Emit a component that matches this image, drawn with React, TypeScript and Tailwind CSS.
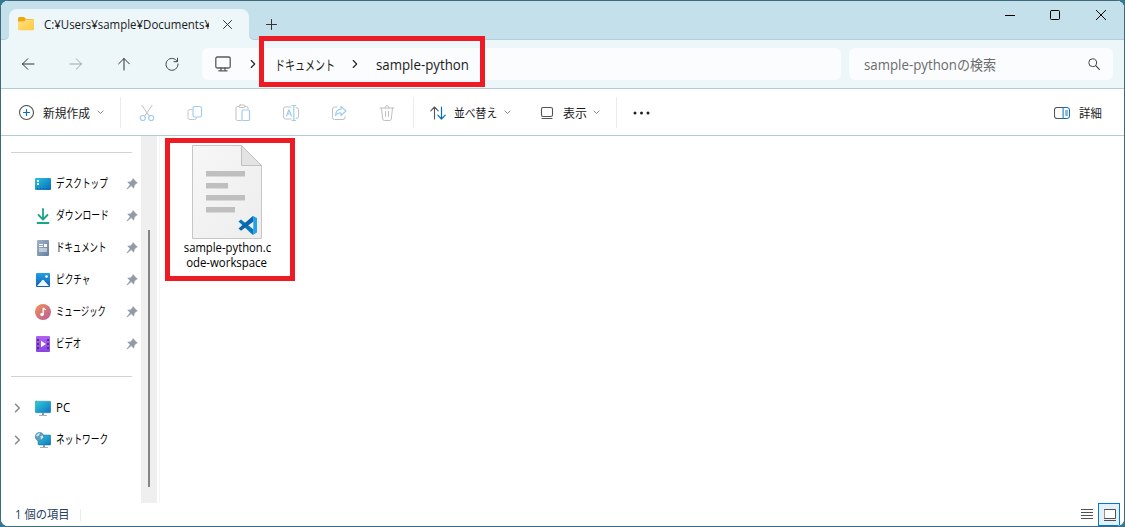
import React from "react";

type SvgProps = { w: number; h: number; className?: string; children: React.ReactNode };

function Svg({ w, h, className = "", children }: SvgProps) {
  return (
    <svg
      width={w}
      height={h}
      viewBox={`0 0 ${w} ${h}`}
      fill="none"
      stroke="currentColor"
      strokeWidth="1"
      strokeLinecap="round"
      strokeLinejoin="round"
      className={`block shrink-0 ${className}`}
    >
      {children}
    </svg>
  );
}

function Label({ box, text, children }: { box: string; text: string; children: React.ReactNode }) {
  return (
    <span className={`block shrink-0 whitespace-nowrap ${box}`}>
      <span className={`inline-block origin-left ${text}`}>{children}</span>
    </span>
  );
}

function FolderIcon() {
  return (
    <Svg w={16} h={14}>
      <path d="M0 2Q0 0 1.500 0H6L8 2H14.500Q16 2 16 3.500V8H0Z" fill="#eda80b" stroke="none" />
      <path d="M0 4.500H6L8 2.600H14.500Q16 2.600 16 4V12Q16 13.300 14.700 13.300H1.300Q0 13.300 0 12Z" fill="url(#folder)" stroke="none" />
      <defs>
        <linearGradient id="folder" x1="0" y1="0" x2="1" y2="1">
          <stop stopColor="#ffe08a" />
          <stop offset="1" stopColor="#ffc93a" />
        </linearGradient>
      </defs>
    </Svg>
  );
}

function TitleBar() {
  return (
    <div className="flex h-[39px] shrink-0 bg-[#c4e1eb]">
      <div className="flex h-full w-2 items-end bg-[#edf6f9]">
        <div className="h-full w-full rounded-br-[5px] border-b border-[#b2ced8] bg-[#c4e1eb]" />
      </div>
      <div className="h-full w-60 bg-[#c4e1eb] pt-2">
        <div className="flex h-[31px] items-center rounded-t-lg bg-[#edf6f9] pb-px pl-[9px]">
          <FolderIcon />
          <Label box="ml-[10px] w-[165px] overflow-hidden pt-px text-[12px] font-medium text-[#1b1b1b]" text="scale-x-[0.955]">
            C:¥Users¥sample¥Documents¥
          </Label>
          <Svg w={9} h={9} className="ml-[14px] text-[#333]">
            <path d="M.5.5l8 8M8.500.5l-8 8" />
          </Svg>
        </div>
      </div>
      <div className="h-full grow bg-[#edf6f9]">
        <div className="flex h-full rounded-bl-[5px] border-b border-[#b2ced8] bg-[#c4e1eb] pl-[17px]">
          <Svg w={11} h={11} className="mt-[18px] text-[#333]">
            <path d="M5.500.5v10M.5 5.500h10" />
          </Svg>
          <div className="grow" />
          <Svg w={10} h={10} className="mt-[9px] mr-[35px] text-black">
            <path d="M0 5.500h10" strokeLinecap="butt" />
          </Svg>
          <Svg w={10} h={10} className="mt-[9px] mr-[36px] text-black">
            <rect x=".5" y=".5" width="9" height="9" rx="1" />
          </Svg>
          <Svg w={10} h={10} className="mt-[9px] mr-[18px] text-black">
            <path d="M.2.2l9.600 9.600M9.800.2L.2 9.800" />
          </Svg>
        </div>
      </div>
    </div>
  );
}

function Arrow({ className }: { className: string }) {
  return (
    <Svg w={14} h={14} className={className}>
      <path d="M13 7H1.500M6.800 1.700L1.500 7l5.300 5.300" />
    </Svg>
  );
}

function Crumb() {
  return (
    <Svg w={6} h={10} className="text-[#222]">
      <path d="M1.200 1.500L4.700 5 1.200 8.500" strokeWidth="1.100" />
    </Svg>
  );
}

function NavBar() {
  return (
    <div className="flex h-[49px] shrink-0 items-center border-b border-[#afcdd6] bg-[#edf6f9]">
      <Arrow className="ml-5 text-[#333]" />
      <Arrow className="ml-[34px] rotate-180 text-[#a0a8ac]" />
      <Arrow className="ml-[34px] rotate-90 text-[#333]" />
      <Svg w={14} h={14} className="ml-[34px] text-[#444]">
        <path d="M12.300 4.500A6 6 0 1 0 13 7M12.500 1.200v3.500H9" />
      </Svg>
      <div className="ml-[23px] flex h-8 w-[639px] items-center rounded-md bg-[#fafcfe] pl-[13px] text-[14px] text-[#1b1b1b]">
        <Svg w={16} h={16} className="text-[#5a5a5a]">
          <rect x=".8" y="1" width="14.400" height="11" rx="1.500" strokeWidth="1.300" />
          <path d="M6 12v2.500M10 12v2.500M3.800 14.800h8.400" strokeWidth="1.300" />
        </Svg>
        <div className="w-[19px]" />
        <Crumb />
        <Label box="ml-[19px] w-[60px]" text="scale-x-[0.715]">ドキュメント</Label>
        <div className="w-[17px]" />
        <Crumb />
        <Label box="ml-[18px] w-[94px]" text="scale-x-[0.948]">sample-python</Label>
      </div>
      <div className="ml-2 flex h-8 w-[264px] items-center rounded-md bg-[#fafcfe] pl-[15px] text-[14px] text-[#6b6b6b]">
        <Label box="w-[93px]" text="scale-x-[0.948]">sample-python</Label>
        <Label box="w-[131px]" text="scale-x-[0.93]">の検索</Label>
        <Svg w={12} h={12} className="text-[#444]">
          <circle cx="4.700" cy="4.700" r="3.900" />
          <path d="M7.700 7.700l3.600 3.600" strokeWidth="1.200" />
        </Svg>
      </div>
    </div>
  );
}

function Chevron({ className }: { className: string }) {
  return (
    <Svg w={7} h={5} className={`text-[#888] ${className}`}>
      <path d="M1 1l2.500 2.500L6 1" />
    </Svg>
  );
}

function Divider({ className }: { className: string }) {
  return <div className={`h-[31px] w-px shrink-0 bg-[#ececec] ${className}`} />;
}

const BLUE = "#9fcdee";

function ToolBar() {
  return (
    <div className="flex h-[47px] shrink-0 items-center border-b border-[#afcdd6] bg-white pt-px text-[12px] text-[#1b1b1b]">
      <Svg w={16} h={16} className="ml-[17px] text-[#555]">
        <circle cx="8.500" cy="7.500" r="7" strokeWidth="1.100" />
        <path d="M8.500 4.500v6M5.500 7.500h6" stroke="#0a6fc2" strokeWidth="1.200" />
      </Svg>
      <Label box="ml-[9px] w-[53px] pt-[2px]" text="scale-x-[0.98]">新規作成</Label>
      <Chevron className="ml-[1px]" />
      <Divider className="ml-[16px]" />

      <Svg w={16} h={18} className="ml-[18px] text-[#bdbdbd]">
        <path d="M3 1.500l7.500 10.800M13 1.500L5.500 12.300" />
        <circle cx="3.800" cy="14" r="2.500" stroke={BLUE} strokeWidth="1.200" />
        <circle cx="12.200" cy="14" r="2.500" stroke={BLUE} strokeWidth="1.200" />
      </Svg>
      <Svg w={16} h={16} className="ml-[32px] text-[#c6c6c6]">
        <path d="M4.500 4.500H3Q1 4.500 1 6.500V12.500Q1 14.500 3 14.500H7.500Q9.500 14.500 9.500 12.500" />
        <rect x="6" y="1.500" width="8.500" height="10.500" rx="1.800" stroke={BLUE} strokeWidth="1.200" />
      </Svg>
      <Svg w={16} h={18} className="ml-[32px] text-[#c0c0c0]">
        <path d="M6 16.500H2.500Q1 16.500 1 15V4Q1 2.500 2.500 2.500H4M10 2.500h1.500Q13 2.500 13 4v1" />
        <rect x="4" y="1" width="6" height="2.500" rx="1.200" />
        <rect x="7" y="6" width="7.500" height="10.500" rx="1" stroke={BLUE} strokeWidth="1.200" />
      </Svg>
      <Svg w={18} h={18} className="ml-[31px] text-[#c0c0c0]">
        <path d="M9 3H3.500Q1.500 3 1.500 5V13Q1.500 15 3.500 15H9M14 3.500Q16.500 3.500 16.500 5.500V12.500Q16.500 14.500 14 14.500" />
        <path d="M4.500 12L7 5.700 9.500 12M5.300 10h3.400M11.800 1.500v15M10 1.500h3.600M10 16.500h3.600" stroke={BLUE} strokeWidth="1.200" />
      </Svg>
      <Svg w={16} h={16} className="ml-[31px] text-[#c0c0c0]">
        <path d="M6 2H3.500Q1.500 2 1.500 4v8.500Q1.500 14.500 3.500 14.500h8.500Q14 14.500 14 12.500V11.500" />
        <path d="M10 1.500L15 6l-5 4.500V8Q6.500 7.500 4.500 10.500 4.800 4.500 10 4.200Z" stroke={BLUE} strokeWidth="1.200" />
      </Svg>
      <Svg w={16} h={18} className="ml-[32px] text-[#c0c0c0]">
        <path d="M1 4h14M2.500 4l1.200 11Q3.900 16.500 5.300 16.500h5.400Q12.100 16.500 12.300 15L13.500 4M6 4Q6 1.500 8 1.500T10 4M6.500 7.500v5M9.500 7.500v5" />
      </Svg>
      <Divider className="ml-[18px]" />

      <Svg w={16} h={14} className="ml-[16px] text-[#555]">
        <path d="M4.500 13V1M.8 4.800L4.500 1l3.700 3.800" strokeWidth="1.100" />
        <path d="M11.500 1v12M7.800 9.200l3.700 3.800 3.700-3.800" stroke="#0a6fc2" strokeWidth="1.200" />
      </Svg>
      <Label box="ml-[8px] w-[49px] pt-[2px]" text="scale-x-[0.9]">並べ替え</Label>
      <Chevron className="ml-[1px]" />
      <Svg w={14} h={14} className="ml-[29px] text-[#555]">
        <rect x="1.500" y="1.500" width="11" height="9" rx="1.500" strokeWidth="1.100" />
        <path d="M2 12.500h10" />
      </Svg>
      <Label box="ml-[9px] w-[28px] pt-[2px]" text="">表示</Label>
      <Chevron className="ml-[2px]" />
      <Divider className="ml-[16px]" />
      <Svg w={18} h={4} className="ml-[16px] text-[#222]">
        <g fill="currentColor" stroke="none">
          <circle cx="2" cy="2" r="1.500" />
          <circle cx="8.500" cy="2" r="1.500" />
          <circle cx="15" cy="2" r="1.500" />
        </g>
      </Svg>
      <div className="grow" />
      <Svg w={16} h={12} className="text-[#555]">
        <path d="M9 .5H3Q.5.5.5 3v6Q.5 11.500 3 11.500H9" strokeWidth="1.100" />
        <path d="M9.500.5H13Q15.500.5 15.500 3v6Q15.500 11.500 13 11.500H9.500ZM11.500 4h2M11.500 6h2M11.500 8h2" stroke="#0a6fc2" />
      </Svg>
      <Label box="ml-[9px] w-[24px] pt-[2px]" text="scale-x-[0.95]">詳細</Label>
      <div className="w-[21px]" />
    </div>
  );
}

function Pin() {
  return (
    <Svg w={12} h={12}>
      <path d="M7 .6L11.400 5 9.900 5.700 8.300 7.500 7.900 10.300 5.200 7.800 1 11.200.7 10.900 4.100 6.700 1.700 4.100 4.500 3.700 6.300 2.100Z" fill="#929ca6" stroke="#929ca6" strokeWidth=".4" />
    </Svg>
  );
}

function DesktopIcon() {
  return (
    <Svg w={16} h={16}>
      <rect x="0" y="2" width="16" height="12" rx="1" fill="url(#desk)" stroke="none" />
      <path d="M2 4h2v2H2zM2 7h2v2H2z" fill="#fff" stroke="none" />
      <path d="M2 12.500h12" stroke="#155e9b" strokeDasharray="1 2" strokeLinecap="butt" />
      <defs>
        <linearGradient id="desk" x1="0" y1="0" x2="1" y2="1">
          <stop stopColor="#24c7dd" />
          <stop offset="1" stopColor="#0d67ba" />
        </linearGradient>
      </defs>
    </Svg>
  );
}

function DownloadIcon() {
  return (
    <Svg w={16} h={16} className="text-[#18a589]">
      <path d="M8 1v10M3.500 7L8 11.500 12.500 7M2.500 15h11" strokeWidth="1.800" />
    </Svg>
  );
}

function DocumentIcon() {
  return (
    <Svg w={16} h={16}>
      <rect x="2" y="0" width="12" height="16" rx="1" fill="url(#doc)" stroke="none" />
      <path d="M4 4h4v1H4zM4 6h4v1H4zM9 4h3v3H9zM4 8.500h8v1H4zM4 10.500h8v1H4z" fill="#fff" stroke="none" />
      <defs>
        <linearGradient id="doc" x1="0" y1="0" x2="1" y2="1">
          <stop stopColor="#9fb3ca" />
          <stop offset="1" stopColor="#667f9d" />
        </linearGradient>
      </defs>
    </Svg>
  );
}

function PictureIcon() {
  return (
    <Svg w={16} h={16}>
      <rect x="1" y="1" width="14" height="14" rx="1" fill="url(#pic)" stroke="none" />
      <path d="M2 14l5.300-5.800Q8 7.500 8.700 8.200L14 14Z" fill="#f2faff" stroke="none" />
      <circle cx="11.500" cy="4.500" r="1.300" fill="#fff" stroke="none" />
      <defs>
        <linearGradient id="pic" x1="0" y1="0" x2="0" y2="1">
          <stop stopColor="#249fe0" />
          <stop offset="1" stopColor="#0b62b7" />
        </linearGradient>
      </defs>
    </Svg>
  );
}

function MusicIcon() {
  return (
    <Svg w={16} h={16}>
      <circle cx="8" cy="8" r="8" fill="url(#mus)" stroke="none" />
      <circle cx="7" cy="10.500" r="1.700" fill="#fff" stroke="none" />
      <path d="M8.200 10.500V4.200l2.300 1.300" stroke="#fff" strokeWidth="1.300" />
      <defs>
        <linearGradient id="mus" x1="0" y1="0" x2="1" y2="1">
          <stop stopColor="#f19452" />
          <stop offset="1" stopColor="#b65aa0" />
        </linearGradient>
      </defs>
    </Svg>
  );
}

function VideoIcon() {
  return (
    <Svg w={16} h={16}>
      <rect x="1" y="0" width="14" height="16" rx="1" fill="url(#vid)" stroke="none" />
      <path d="M3 3v12M13 3v12" stroke="#4c257c" strokeWidth="1.700" strokeDasharray="2 2" strokeLinecap="butt" />
      <path d="M6 4.800V11.200L11 8Z" fill="#fff" stroke="none" />
      <defs>
        <linearGradient id="vid" x1="0" y1="0" x2="0" y2="1">
          <stop stopColor="#b062ef" />
          <stop offset="1" stopColor="#8844e0" />
        </linearGradient>
      </defs>
    </Svg>
  );
}

function PcIcon() {
  return (
    <Svg w={16} h={16}>
      <rect x=".2" y="1.200" width="15.600" height="11.600" rx="1" fill="url(#pc)" stroke="#176f9e" strokeWidth=".4" />
      <path d="M7 13h2v2h3v.8H4V15h3z" fill="#8b98a3" stroke="none" />
      <defs>
        <linearGradient id="pc" x1="0" y1="0" x2="1" y2="1">
          <stop stopColor="#2bd1dc" />
          <stop offset="1" stopColor="#1070c0" />
        </linearGradient>
      </defs>
    </Svg>
  );
}

function NetworkIcon() {
  return (
    <Svg w={16} h={16}>
      <rect x="3" y="3" width="12.800" height="10" rx="1" fill="url(#pc)" stroke="#176f9e" strokeWidth=".5" />
      <path d="M8 13h2v2h3v.8H5V15h3z" fill="#8b98a3" stroke="none" />
      <circle cx="4.600" cy="4.700" r="4.300" fill="#5d9fbd" stroke="#3e7d9d" strokeWidth=".6" />
      <path d="M1 3.500Q3 .7 5 1L4 3.500 2 4.500ZM5.500 4l2.500-.5.300 2L6 7.500Z" fill="#c9e9f4" stroke="none" />
    </Svg>
  );
}

const places = [
  { icon: <DesktopIcon />, name: "デスクトップ", scale: "scale-x-[0.72]" },
  { icon: <DownloadIcon />, name: "ダウンロード", scale: "scale-x-[0.735]" },
  { icon: <DocumentIcon />, name: "ドキュメント", scale: "scale-x-[0.7]" },
  { icon: <PictureIcon />, name: "ピクチャ", scale: "scale-x-[0.72]" },
  { icon: <MusicIcon />, name: "ミュージック", scale: "scale-x-[0.695]" },
  { icon: <VideoIcon />, name: "ビデオ", scale: "scale-x-[0.7]" },
];

const roots = [
  { icon: <PcIcon />, name: "PC", scale: "scale-x-[0.96]" },
  { icon: <NetworkIcon />, name: "ネットワーク", scale: "scale-x-[0.725]" },
];

function Sidebar() {
  return (
    <nav className="flex w-[140px] shrink-0 flex-col text-[12px] text-black">
      <div className="mt-[16px] mr-[9px] mb-[15px] ml-[10px] h-px bg-[#d2d2d2]" />
      {places.map((p) => (
        <div key={p.name} className="flex h-8 items-center pl-[34px]">
          {p.icon}
          <Label box="ml-[5px] w-[70px]" text={p.scale}>{p.name}</Label>
          <Pin />
        </div>
      ))}
      <div className="mt-[16px] mr-[9px] mb-[15px] ml-[10px] h-px bg-[#d2d2d2]" />
      {roots.map((r) => (
        <div key={r.name} className="flex h-8 items-center pl-[13px]">
          <Svg w={7} h={10} className="mr-[14px] text-[#888]">
            <path d="M1.500 1.200L5.300 5 1.500 8.800" strokeWidth="1.500" />
          </Svg>
          {r.icon}
          <Label box="ml-[5px] w-[70px]" text={r.scale}>{r.name}</Label>
        </div>
      ))}
    </nav>
  );
}

function WorkspaceFile() {
  return (
    <div className="flex w-[110px] flex-col items-center text-[12px] leading-[15px] text-black">
      <svg width="70" height="94" viewBox="0 0 70 94" className="block">
        <defs>
          <linearGradient id="paper" x1="0" y1="0" x2="1" y2="1">
            <stop stopColor="#f7f7f7" />
            <stop offset="1" stopColor="#ededed" />
          </linearGradient>
        </defs>
        <path d="M.5.5H49.500L69.500 20.500V93.500H.5Z" fill="url(#paper)" stroke="#c6c6c6" />
        <path d="M49.500.5V20.500H69.500Z" fill="#e3e3e3" stroke="#c0c0c0" />
        <path d="M14 26h39v5.500H14zM14 38h22v5.500H14zM14 50h39v5.500H14zM14 62h29v5.500H14z" fill="#bfbfbf" />
        <path d="M46.500 76.500L49 74.500 61.500 84.500V89.500L60 89.300Z" fill="#0877b9" />
        <path d="M46.500 83.500L49 85.700 61.500 76.500V71.500L60 71.700Z" fill="#0b65a9" />
        <path d="M59.800 71.300L61 71 65 73V87.500L61 89.700 59.800 89.300 61.300 88V73Z" fill="#25a0e8" />
      </svg>
      <span className="mt-[1px] inline-block scale-x-[0.94] whitespace-nowrap">sample-python.c</span>
      <span className="inline-block scale-x-[0.95] whitespace-nowrap">ode-workspace</span>
    </div>
  );
}

function StatusBar() {
  return (
    <div className="flex h-[23px] shrink-0 items-center bg-white pl-[14px] text-[12px] text-[#26415f]">
      <Label box="w-[65px]" text="scale-x-[0.94]">1 個の項目</Label>
      <div className="h-3 w-px bg-[#ececec]" />
      <div className="grow" />
      <Svg w={12} h={11} className="mr-[5px] text-[#505050]">
        <path d="M0 .5h12M0 3.500h12M0 6.500h12M0 9.500h12" strokeLinecap="butt" />
      </Svg>
      <div className="mr-1 flex h-[23px] w-[22px] items-center justify-center border border-[#0078d4] bg-[#e5f1fa] pl-[2px]">
        <Svg w={12} h={13} className="mt-[1px] text-[#505050]">
          <rect x=".5" y=".5" width="11" height="9" fill="#fff" />
          <path d="M0 11.500h12" strokeLinecap="butt" />
        </Svg>
      </div>
    </div>
  );
}

export default function App() {
  return (
    <div className="relative h-[527px] w-[1125px] overflow-hidden bg-[#2c7a94] font-['Open_Sans','Noto_Sans_CJK_JP',sans-serif]">
      <div className="flex h-full w-full flex-col overflow-hidden rounded-lg border border-[#3f6a7d] bg-white">
        <TitleBar />
        <NavBar />
        <ToolBar />
        <div className="flex min-h-0 grow">
          <Sidebar />
          <div className="flex w-4 shrink-0 justify-center bg-[#efefef]">
            <div className="mt-[94px] h-[257px] w-[2px] bg-[#858585]" />
          </div>
          <div className="ml-[2px] w-px bg-[#f5f5f5]" />
          <main className="pt-[9px] pl-[12px]">
            <WorkspaceFile />
          </main>
        </div>
        <StatusBar />
      </div>
      <div className="absolute top-[36px] left-[259px] h-[51px] w-[226px] border-5 border-[#ed1c24]" />
      <div className="absolute top-[138px] left-[165px] h-[143px] w-[130px] border-5 border-[#ed1c24]" />
    </div>
  );
}
